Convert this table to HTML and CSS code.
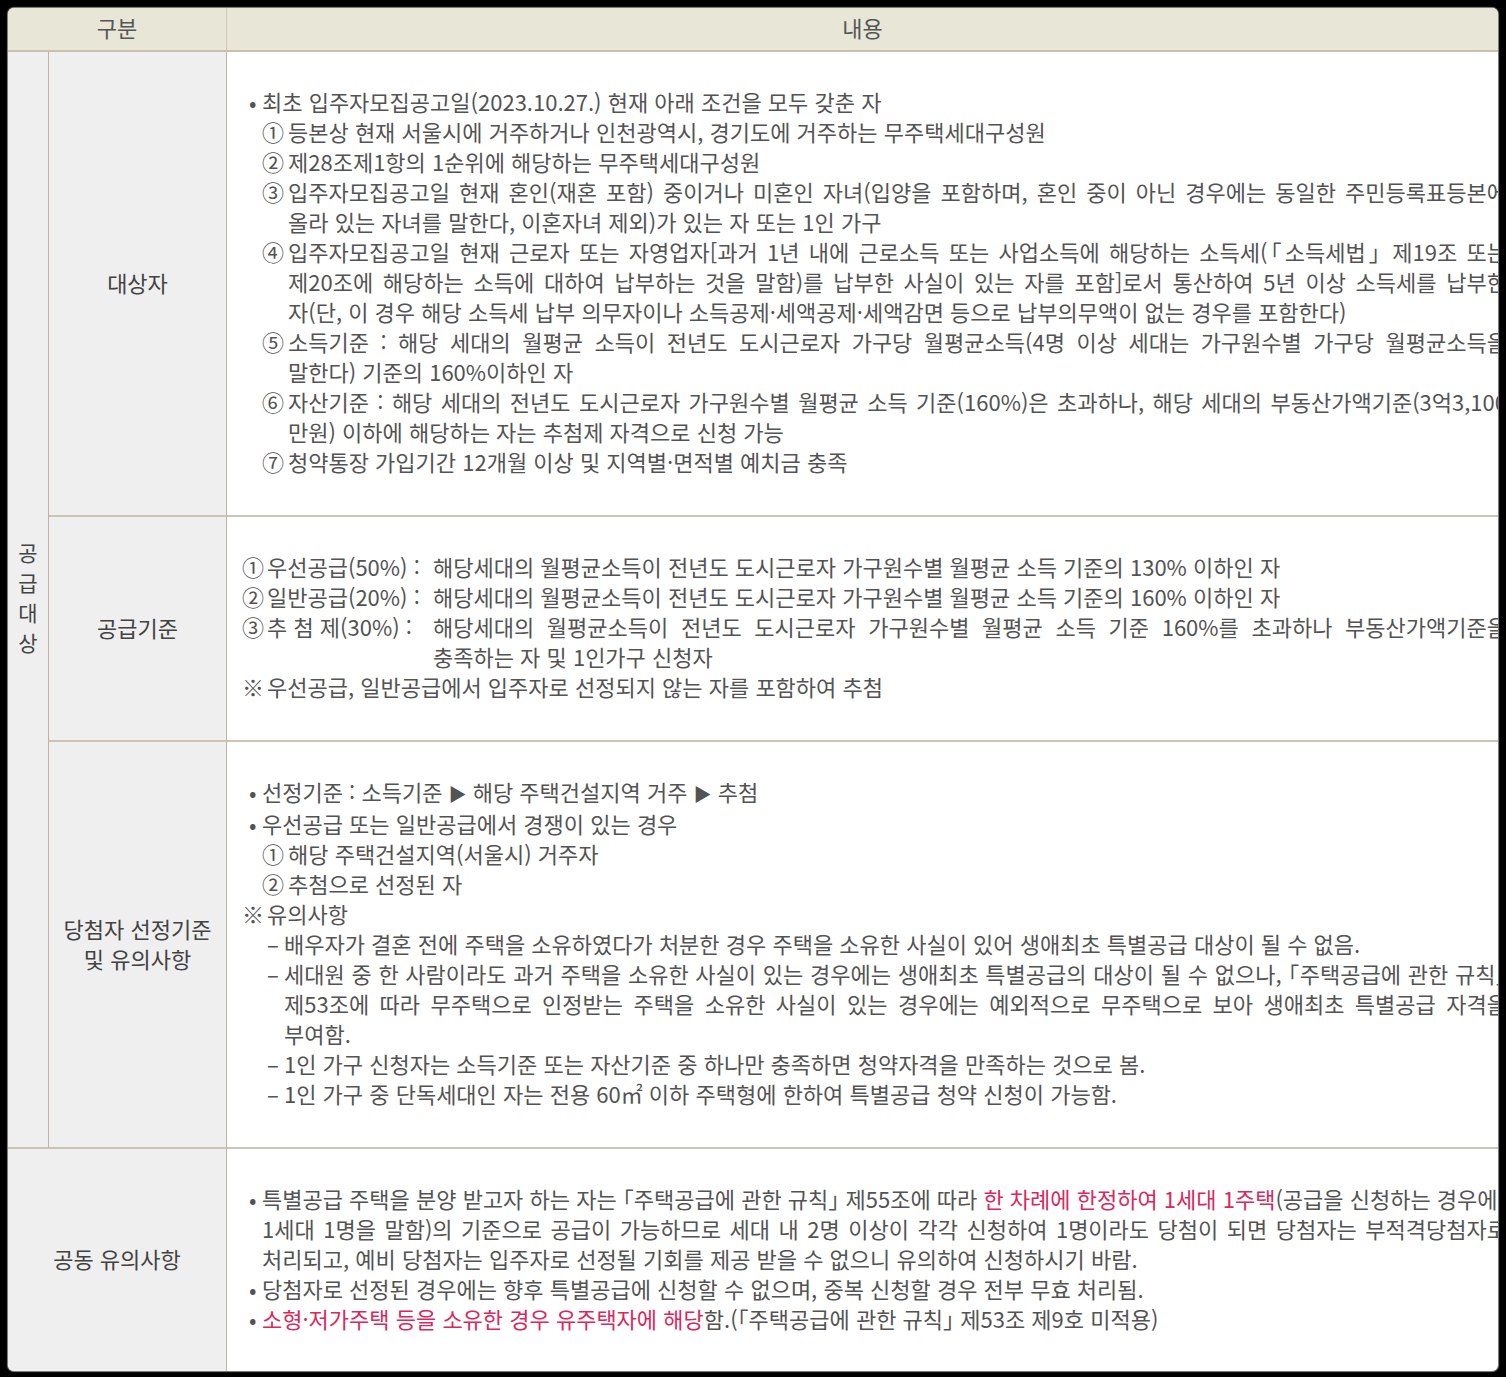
FILE: index.html
```html
<!DOCTYPE html>
<html lang="ko">
<head>
<meta charset="utf-8">
<title>공급대상</title>
<link rel="stylesheet" href="styles.css">
</head>
<body>
<div class="sheet">
  <div class="head head-left">구분</div>
  <div class="head head-right">내용</div>

  <div class="vlabel"><span>공</span><span>급</span><span>대</span><span>상</span></div>

  <div class="label r1">대상자</div>
  <div class="content r1">
    <div class="lines">
      <div class="ln b"><span class="bul">•</span>최초 입주자모집공고일(2023.10.27.) 현재 아래 조건을 모두 갖춘 자</div>
      <div class="ln c"><span class="num">①</span>등본상 현재 서울시에 거주하거나 인천광역시, 경기도에 거주하는 무주택세대구성원</div>
      <div class="ln c"><span class="num">②</span>제28조제1항의 1순위에 해당하는 무주택세대구성원</div>
      <div class="ln c j"><span class="num">③</span>입주자모집공고일 현재 혼인(재혼 포함) 중이거나 미혼인 자녀(입양을 포함하며, 혼인 중이 아닌 경우에는 동일한 주민등록표등본에</div>
      <div class="ln cc">올라 있는 자녀를 말한다, 이혼자녀 제외)가 있는 자 또는 1인 가구</div>
      <div class="ln c j"><span class="num">④</span>입주자모집공고일 현재 근로자 또는 자영업자[과거 1년 내에 근로소득 또는 사업소득에 해당하는 소득세(<span class="qt">「</span>소득세법<span class="qt">」</span> 제19조 또는</div>
      <div class="ln cc j">제20조에 해당하는 소득에 대하여 납부하는 것을 말함)를 납부한 사실이 있는 자를 포함]로서 통산하여 5년 이상 소득세를 납부한</div>
      <div class="ln cc">자(단, 이 경우 해당 소득세 납부 의무자이나 소득공제·세액공제·세액감면 등으로 납부의무액이 없는 경우를 포함한다)</div>
      <div class="ln c j"><span class="num">⑤</span>소득기준 : 해당 세대의 월평균 소득이 전년도 도시근로자 가구당 월평균소득(4명 이상 세대는 가구원수별 가구당 월평균소득을</div>
      <div class="ln cc">말한다) 기준의 160%이하인 자</div>
      <div class="ln c j"><span class="num">⑥</span>자산기준 : 해당 세대의 전년도 도시근로자 가구원수별 월평균 소득 기준(160%)은 초과하나, 해당 세대의 부동산가액기준(3억3,100</div>
      <div class="ln cc">만원) 이하에 해당하는 자는 추첨제 자격으로 신청 가능</div>
      <div class="ln c"><span class="num">⑦</span>청약통장 가입기간 12개월 이상 및 지역별·면적별 예치금 충족</div>
    </div>
  </div>

  <div class="label r2">공급기준</div>
  <div class="content r2">
    <div class="lines">
      <div class="ln"><span class="key"><span class="num2">①</span>우선공급(50%) :</span>해당세대의 월평균소득이 전년도 도시근로자 가구원수별 월평균 소득 기준의 130% 이하인 자</div>
      <div class="ln"><span class="key"><span class="num2">②</span>일반공급(20%) :</span>해당세대의 월평균소득이 전년도 도시근로자 가구원수별 월평균 소득 기준의 160% 이하인 자</div>
      <div class="ln j"><span class="key"><span class="num2">③</span>추 첨 제(30%) :</span>해당세대의 월평균소득이 전년도 도시근로자 가구원수별 월평균 소득 기준 160%를 초과하나 부동산가액기준을</div>
      <div class="ln kc">충족하는 자 및 1인가구 신청자</div>
      <div class="ln"><span class="num2">※</span>우선공급, 일반공급에서 입주자로 선정되지 않는 자를 포함하여 추첨</div>
    </div>
  </div>

  <div class="label r3">당첨자 선정기준<br>및 유의사항</div>
  <div class="content r3">
    <div class="lines">
      <div class="ln b"><span class="bul">•</span>선정기준 : 소득기준 <span class="tri">▶</span> 해당 주택건설지역 거주 <span class="tri">▶</span> 추첨</div>
      <div class="ln b"><span class="bul">•</span>우선공급 또는 일반공급에서 경쟁이 있는 경우</div>
      <div class="ln c"><span class="num">①</span>해당 주택건설지역(서울시) 거주자</div>
      <div class="ln c"><span class="num">②</span>추첨으로 선정된 자</div>
      <div class="ln"><span class="num2">※</span>유의사항</div>
      <div class="ln d"><span class="dash">–</span>배우자가 결혼 전에 주택을 소유하였다가 처분한 경우 주택을 소유한 사실이 있어 생애최초 특별공급 대상이 될 수 없음.</div>
      <div class="ln d j"><span class="dash">–</span>세대원 중 한 사람이라도 과거 주택을 소유한 사실이 있는 경우에는 생애최초 특별공급의 대상이 될 수 없으나, <span class="qt">「</span>주택공급에 관한 규칙<span class="qt">」</span></div>
      <div class="ln dc j">제53조에 따라 무주택으로 인정받는 주택을 소유한 사실이 있는 경우에는 예외적으로 무주택으로 보아 생애최초 특별공급 자격을</div>
      <div class="ln dc">부여함.</div>
      <div class="ln d"><span class="dash">–</span>1인 가구 신청자는 소득기준 또는 자산기준 중 하나만 충족하면 청약자격을 만족하는 것으로 봄.</div>
      <div class="ln d"><span class="dash">–</span>1인 가구 중 단독세대인 자는 전용 60㎡ 이하 주택형에 한하여 특별공급 청약 신청이 가능함.</div>
    </div>
  </div>

  <div class="label wide r4">공동 유의사항</div>
  <div class="content r4">
    <div class="lines">
      <div class="ln b j"><span class="bul">•</span>특별공급 주택을 분양 받고자 하는 자는 <span class="qt">「</span>주택공급에 관한 규칙<span class="qt">」</span> 제55조에 따라 <span class="red">한 차례에 한정하여 1세대 1주택</span>(공급을 신청하는 경우에는</div>
      <div class="ln bc j">1세대 1명을 말함)의 기준으로 공급이 가능하므로 세대 내 2명 이상이 각각 신청하여 1명이라도 당첨이 되면 당첨자는 부적격당첨자로</div>
      <div class="ln bc">처리되고, 예비 당첨자는 입주자로 선정될 기회를 제공 받을 수 없으니 유의하여 신청하시기 바람.</div>
      <div class="ln b"><span class="bul">•</span>당첨자로 선정된 경우에는 향후 특별공급에 신청할 수 없으며, 중복 신청할 경우 전부 무효 처리됨.</div>
      <div class="ln b"><span class="bul">•</span><span class="red">소형·저가주택 등을 소유한 경우 유주택자에 해당</span>함.(<span class="qt">「</span>주택공급에 관한 규칙<span class="qt">」</span> 제53조 제9호 미적용)</div>
    </div>
  </div>
</div>
</body>
</html>
```

FILE: styles.css
```css
html, body {
  margin: 0;
  padding: 0;
}

body {
  background: #000;
  padding: 8px 8px 9px 8px;
  font-family: "Noto Sans CJK KR", "Noto Sans", sans-serif;
  color: #535353;
}

.sheet {
  width: 1490px;
  display: grid;
  grid-template-columns: 41px 178px 1fr;
  grid-template-rows: 44px auto auto auto auto;
  background: #fff;
  border-radius: 6px;
  overflow: hidden;
  box-shadow: 0 0 1px 1px rgba(170, 170, 170, 0.8);
}

.head {
  background: #e8e6d7;
  border-bottom: 2px solid #c9c1ac;
  display: flex;
  align-items: center;
  justify-content: center;
  padding-bottom: 5px;
  font-size: 22px;
  color: #555;
}

.head-left {
  grid-column: 1 / 3;
  border-right: 1px solid #cfc7b4;
}

.head-right {
  grid-column: 3 / 4;
}

.vlabel {
  grid-column: 1 / 2;
  grid-row: 2 / 5;
  background: #efefef;
  border-right: 1px solid #bdb4a1;
  border-bottom: 2px solid #cdc5b3;
  display: flex;
  flex-direction: column;
  align-items: center;
  justify-content: center;
  font-size: 21px;
  line-height: 30px;
  color: #444;
  padding-bottom: 6px;
}

.label {
  grid-column: 2 / 3;
  background: #efefef;
  border-right: 1px solid #bdb4a1;
  border-bottom: 2px solid #cdc5b3;
  display: flex;
  align-items: center;
  justify-content: center;
  text-align: center;
  padding-bottom: 4px;
  font-size: 22px;
  line-height: 30px;
  color: #424242;
}

.label.wide {
  grid-column: 1 / 3;
  border-bottom: none;
}

.r1 { grid-row: 2 / 3; }
.r2 { grid-row: 3 / 4; }
.r3 { grid-row: 4 / 5; }
.r4 { grid-row: 5 / 6; }

.content {
  grid-column: 3 / 4;
  min-width: 0;
  overflow: hidden;
  border-bottom: 2px solid #cdc5b3;
  padding: 34px 0 39px 15px;
}

.content.r4 {
  border-bottom: none;
  padding-bottom: 38px;
}

.lines {
  width: 1265px;
  font-size: 22px;
  line-height: 30px;
}

.ln {
  white-space: nowrap;
}

.ln.j {
  text-align: justify;
  text-align-last: justify;
}

.ln.b { padding-left: 7px; }
.ln.bc { padding-left: 20px; }
.ln.c { padding-left: 20px; }
.ln.cc { padding-left: 46px; }
.ln.d { padding-left: 25px; }
.ln.dc { padding-left: 42px; }
.ln.kc { padding-left: 191px; }

.bul {
  display: inline-block;
  width: 13px;
}

.num {
  display: inline-block;
  width: 26px;
}

.num2 {
  display: inline-block;
  width: 25px;
}

.dash {
  display: inline-block;
  width: 17px;
}

.key {
  display: inline-block;
  min-width: 191px;
  text-align: left;
  text-align-last: left;
}

.qt {
  font-feature-settings: "halt" 1;
}

.tri {
  font-size: 18px;
}

.red {
  color: #d9285c;
}
```
